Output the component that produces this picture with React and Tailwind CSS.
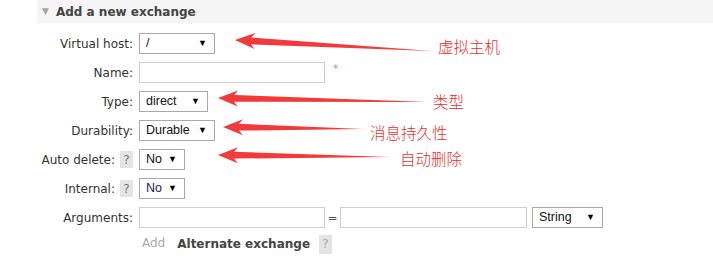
import React from "react";

const arrows = [
  { tip: [235, 40], tail: [432, 51] },
  { tip: [218, 98], tail: [428, 102] },
  { tip: [223, 127], tail: [363, 129] },
  { tip: [218, 155], tail: [390, 157] },
];

function arrowPoints({ tip, tail }) {
  const [tx, ty] = tip;
  const [ex, ey] = tail;
  const len = Math.hypot(ex - tx, ey - ty);
  const dx = (ex - tx) / len;
  const dy = (ey - ty) / len;
  const nx = -dy;
  const ny = dx;
  const p = (a, b) => `${(tx + dx * a + nx * b).toFixed(1)},${(ty + dy * a + ny * b).toFixed(1)}`;
  return [p(0, 0), p(20, -8), p(16, -3.4), `${ex},${ey}`, p(16, 3.4), p(20, 8)].join(" ");
}

function Select({ value, width, navy }) {
  return (
    <div
      className={`h-[21px] border border-[#a9a9a9] bg-white flex items-center justify-between pl-[6px] pr-[7px] font-['Liberation_Sans',Arial,sans-serif] text-[12.5px] ${navy ? "text-[#1c1a5c]" : "text-[#111]"}`}
      style={{ width }}
    >
      <span>{value}</span>
      <span className="text-[9px] leading-none text-black">▼</span>
    </div>
  );
}

function Input({ width }) {
  return <div className="h-[21px] border border-[#cfcfcf] bg-white" style={{ width }} />;
}

function Help() {
  return (
    <span className="inline-flex items-center justify-center w-[13px] h-[17px] bg-[#e4e4e4] text-[#777] text-[12px] leading-none">?</span>
  );
}

function Row({ label, help, children, h = "h-[29px]" }) {
  return (
    <div className={`flex items-center ${h}`}>
      <div className="w-[133px] flex items-center justify-end gap-[5px] text-[#333]">
        {label && <span>{label}</span>}
        {help && <Help />}
      </div>
      <div className="ml-[6px] flex items-center">{children}</div>
    </div>
  );
}

export default function App() {
  return (
    <div className="relative w-[713px] h-[268px] bg-white overflow-hidden font-['DejaVu_Sans',Verdana,sans-serif] text-[12px] text-[#444]">
      <div className="ml-[37px] h-[23px] bg-[#f5f5f5] flex items-center pl-[5px]">
        <span className="text-[#a5a5a5] text-[9px] leading-none">▼</span>
        <span className="ml-[7px] font-bold text-[#444]">Add a new exchange</span>
      </div>

      <div className="pt-[6px]">
        <Row label="Virtual host:">
          <Select value="/" width={76} />
        </Row>
        <Row label="Name:">
          <Input width={186} />
          <span className="ml-[8px] -mt-[6px] text-[#e58a8a] text-[11px]">*</span>
        </Row>
        <Row label="Type:">
          <Select value="direct" width={69} />
        </Row>
        <Row label="Durability:">
          <Select value="Durable" width={76} />
        </Row>
        <Row label="Auto delete:" help>
          <Select value="No" width={46} />
        </Row>
        <Row label="Internal:" help>
          <Select value="No" width={46} navy />
        </Row>
        <Row label="Arguments:">
          <Input width={186} />
          <span className="w-[15px] text-center text-[#555]">=</span>
          <Input width={187} />
          <div className="ml-[5px]">
            <Select value="String" width={71} />
          </div>
        </Row>
        <Row label="" h="h-[22px]">
          <span className="ml-[3px] text-[#aaa]">Add</span>
          <span className="ml-[12px] mt-[2px] font-bold text-[#444]">Alternate exchange</span>
          <span className="ml-[9px] mt-[2px] inline-flex">
            <span className="inline-flex items-center justify-center w-[13px] h-[19px] bg-[#e4e4e4] text-[#aaa] text-[12px] leading-none">?</span>
          </span>
        </Row>
      </div>

      <svg className="absolute inset-0 pointer-events-none" width="713" height="268" viewBox="0 0 713 268">
        {arrows.map((a, i) => (
          <polygon key={i} points={arrowPoints(a)} fill="#f23a3a" />
        ))}
      </svg>

      <div className="absolute inset-0 pointer-events-none font-['Noto_Sans_CJK_SC',sans-serif] font-light text-[#e3302e] text-[15.5px] leading-[18px]">
        <span className="absolute left-[438px] top-[37px]">虚拟主机</span>
        <span className="absolute left-[433px] top-[92px]">类型</span>
        <span className="absolute left-[370px] top-[123px]">消息持久性</span>
        <span className="absolute left-[400px] top-[149px]">自动删除</span>
      </div>
    </div>
  );
}
